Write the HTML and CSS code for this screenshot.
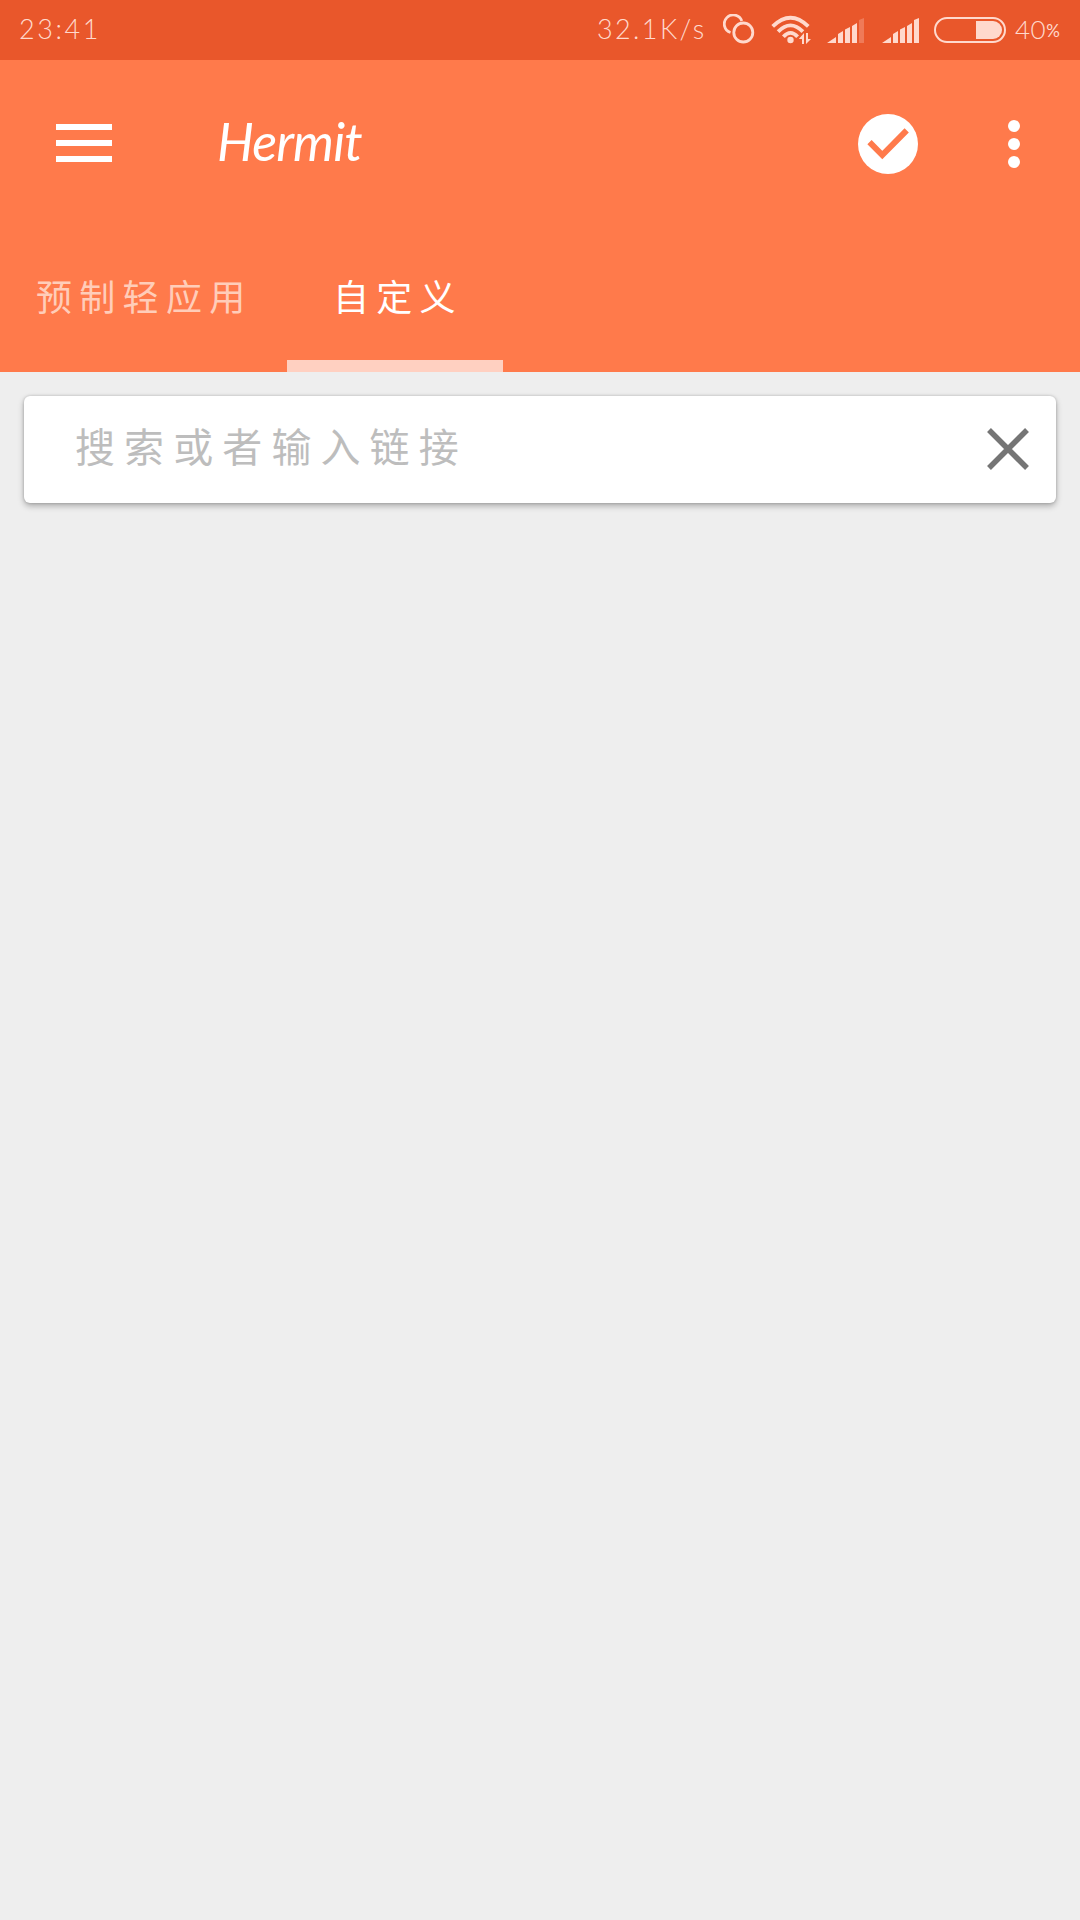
FILE: index.html
```html
<!DOCTYPE html>
<html lang="zh-CN">
<head>
<meta charset="utf-8">
<title>Hermit</title>
<link rel="stylesheet" href="styles.css">
</head>
<body>
<div class="status">
  <span class="time">23:41</span>
  <span class="speed">32.1K/s</span>
  <svg class="rings" width="32" height="30" viewBox="0 0 32 30" fill="none" stroke="currentColor" stroke-width="2.8"><path d="M7.5 18.5A9 9 0 1 1 18.8 7"/><circle cx="20.3" cy="18.5" r="9.5"/></svg>
  <svg class="wifi" width="40" height="30" viewBox="0 0 40 30"><g fill="none" stroke="currentColor" stroke-width="3.8"><path d="M1.7 11.3Q19.5-6 37.3 11.3"/><path d="M7.1 16.7Q19.5 4.2 31.9 16.7"/><path d="M12.4 21.8Q19.5 14 26.6 21.8"/></g><circle cx="19.5" cy="25" r="3.2" fill="currentColor"/><path d="M33 18v11h-2v-5h-3.2zM35 29V18h2v6h3z" fill="currentColor"/></svg>
  <svg class="signal" width="38" height="26" viewBox="0 0 38 26" fill="currentColor"><path d="M0 25 9 19V25zM11 25V16l5-3v12zM18 25V11.500l5-2.500v16zM25 25V8l5-3v20z"/><path d="M32 25V2l5-2v25z" opacity=".28"/></svg>
  <svg class="signal" width="38" height="26" viewBox="0 0 38 26" fill="currentColor"><path d="M0 25 9 19V25zM11 25V16l5-3v12zM18 25V11.500l5-2.500v16zM25 25V8l5-3v20zM32 25V2l5-2v25z"/></svg>
  <svg class="battery" width="72" height="26" viewBox="0 0 72 26"><rect x="1" y="1" width="70" height="24" rx="12" fill="none" stroke="currentColor" stroke-width="2"/><path d="M42 4h17a9 9 0 0 1 0 18H42z" fill="currentColor"/></svg>
  <span class="percent">40<small>%</small></span>
</div>
<header class="header">
  <div class="toolbar">
    <svg class="menu" width="56" height="38" viewBox="0 0 56 38" fill="#fff"><path d="M0 0h56v6H0zM0 16h56v6H0zM0 32h56v6H0z"/></svg>
    <h1 class="title">Hermit</h1>
    <svg class="check" width="60" height="60" viewBox="0 0 60 60"><circle cx="30" cy="30" r="30" fill="#fff"/><path d="M11.500 28.200 24.300 41 48.700 16.400" fill="none" stroke="#ff7a4b" stroke-width="6"/></svg>
    <svg class="more" width="12" height="48" viewBox="0 0 12 48" fill="#fff"><circle cx="6" cy="6" r="6"/><circle cx="6" cy="24" r="6"/><circle cx="6" cy="42" r="6"/></svg>
  </div>
  <nav class="tabs">
    <div class="tab">预制轻应用</div>
    <div class="tab active">自定义</div>
  </nav>
</header>
<main>
  <div class="search">
    <span class="hint">搜索或者输入链接</span>
    <svg width="42" height="42" viewBox="0 0 42 42" fill="none" stroke="#757575" stroke-width="5.500"><path d="M2 2 40 40M40 2 2 40"/></svg>
  </div>
</main>
</body>
</html>
```
FILE: styles.css
```css
* { box-sizing: border-box; }
body {
  margin: 0;
  min-height: 1920px;
  background: #eee;
  font-family: "Lato", "Noto Sans CJK SC", sans-serif;
}
svg { display: block; flex: none; }
.status {
  display: flex;
  align-items: center;
  height: 60px;
  padding: 0 21px 3px 19px;
  background: #e9572b;
  color: #ffd9cd;
  font-size: 27px;
  font-weight: 300;
  white-space: nowrap;
}
.time { letter-spacing: 2.6px; }
.speed { width: 108px; margin-left: auto; letter-spacing: 2.4px; }
.rings { margin-left: 18px; }
.wifi { margin-left: 16px; margin-top: 2px; }
.signal { margin-left: 16px; margin-top: 4px; }
.signal + .signal { margin-left: 17px; }
.battery { margin-left: 14px; margin-top: 3px; }
.percent { width: 44px; margin-left: 9px; font-size: 26px; letter-spacing: .5px; }
.percent small { font-size: 17px; font-weight: 400; vertical-align: 2px; letter-spacing: 0; }
.header {
  height: 312px;
  background: #ff7a4b;
}
.toolbar {
  display: flex;
  align-items: center;
  height: 168px;
  padding: 0 60px 0 56px;
}
.menu { margin-top: -2px; }
.title {
  margin: -6px 0 0 105px;
  color: #fff;
  font-size: 52px;
  font-weight: 400;
  font-style: italic;
  line-height: 1;
  letter-spacing: -.9px;
}
.check { margin-left: auto; }
.more { margin-left: 90px; }
.tabs { display: flex; height: 144px; }
.tab {
  width: 287px;
  padding: 42px 0 0 36px;
  color: #ffcdb9;
  font-family: "Noto Sans CJK SC", sans-serif;
  font-size: 36px;
  font-weight: 400;
  line-height: 50px;
  letter-spacing: 7.3px;
  white-space: nowrap;
}
.tab.active {
  width: 216px;
  padding-left: 46px;
  border-bottom: 12px solid #ffd0c1;
  color: #fff;
}
.search {
  display: flex;
  align-items: center;
  justify-content: space-between;
  height: 107px;
  margin: 24px 24px 0;
  padding: 0 27px 2px 51px;
  border-radius: 6px;
  background: #fff;
  box-shadow: 0 3px 6px rgba(0, 0, 0, .28), 0 0 3px rgba(0, 0, 0, .2);
}
.hint {
  margin-top: -7px;
  color: #bdbdbd;
  font-family: "Noto Sans CJK SC", sans-serif;
  font-size: 40px;
  font-weight: 400;
  line-height: 60px;
  letter-spacing: 9.1px;
}
```
